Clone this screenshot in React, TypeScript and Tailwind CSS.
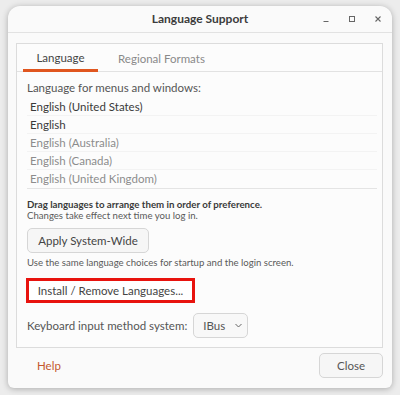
import React from 'react';

const font = { fontFamily: 'Lato, "Noto Sans", sans-serif' };

const languages = [
  { name: 'English (United States)', active: true },
  { name: 'English', active: true },
  { name: 'English (Australia)', active: false },
  { name: 'English (Canada)', active: false },
  { name: 'English (United Kingdom)', active: false },
];

export default function App() {
  return (
    <div className="w-[400px] h-[395px] bg-[#ececec] pt-[6px] pl-[8px]" style={font}>
      <div className="w-[384px] h-[382px] bg-[#fafafa] rounded-t-[12px] rounded-b-[6px] shadow-[0_1px_6px_rgba(0,0,0,0.28)] flex flex-col text-[#444]">
        {/* title bar */}
        <div className="h-[27px] border-b border-[#e2e2e2] flex items-center relative">
          <div className="flex-1 text-center text-[12px] font-bold text-[#3c3c3c]">Language Support</div>
          <div className="absolute right-[8px] top-0 h-full flex items-center gap-[14px] text-[#666]">
            <svg width="12" height="12" viewBox="0 0 12 12"><path d="M3.5 8.5h5" stroke="currentColor" strokeWidth="1" /></svg>
            <svg width="12" height="12" viewBox="0 0 12 12"><rect x="3.5" y="3.5" width="5" height="5" fill="none" stroke="currentColor" strokeWidth="1" /></svg>
            <svg width="12" height="12" viewBox="0 0 12 12"><path d="M3.5 3.5l5 5M8.5 3.5l-5 5" stroke="currentColor" strokeWidth="1.1" /></svg>
          </div>
        </div>

        {/* notebook */}
        <div className="mt-[10px] ml-[8px] w-[367px] h-[305px] border border-[#dcdcdc] bg-[#fcfcfc] flex flex-col">
          <div className="h-[28px] border-b border-[#e2e2e2] flex items-end pl-[6px] text-[11.5px]">
            <div className="w-[75px] h-full flex items-center justify-center border-b-[3px] border-[#e0561f] -mb-px pt-[2px]">Language</div>
            <div className="ml-[20px] h-full flex items-center text-[#8a8a8a] pt-[2px]">Regional Formats</div>
          </div>

          <div className="pl-[10px] pr-[5px] flex flex-col">
            <div className="mt-[7px] text-[11.5px] leading-[17px] text-[#555]">Language for menus and windows:</div>
            <div className="mt-[2px] w-[350px] border-b border-[#e4e4e4]">
              {languages.map((l, i) => (
                <div
                  key={l.name}
                  className={`h-[18px] pl-[3px] flex items-center text-[11.5px] ${i < 4 ? 'border-b border-[#f3f3f3]' : ''} ${l.active ? 'text-[#3a3a3a]' : 'text-[#8c8c8c]'}`}
                >
                  {l.name}
                </div>
              ))}
            </div>
            <div className="mt-[9px] text-[9.7px] leading-[12px] font-bold text-[#3a3a3a]">Drag languages to arrange them in order of preference.</div>
            <div className="text-[9.6px] leading-[12px] text-[#5a5a5a]">Changes take effect next time you log in.</div>
            <button className="mt-[6px] w-[122px] h-[25px] border border-[#d6d6d6] rounded-[5px] bg-[#f6f6f6] text-[11.5px] text-[#444]">Apply System-Wide</button>
            <div className="mt-[4px] text-[9.6px] leading-[12px] text-[#5a5a5a]">Use the same language choices for startup and the login screen.</div>
            <div className="mt-[9px] -ml-[1px] w-[169px] h-[25px] border-[3px] border-[#e8130e]">
              <button className="w-full h-full bg-white text-[11.5px] text-[#444] flex items-center justify-center whitespace-nowrap">Install / Remove Languages...</button>
            </div>
            <div className="mt-[10px] flex items-center">
              <span className="text-[11.5px] text-[#555]">Keyboard input method system:</span>
              <div className="ml-[6px] w-[55px] h-[25px] border border-[#d6d6d6] rounded-[5px] bg-[#f8f8f8] flex items-center pl-[9px] gap-[9px] text-[11.5px] text-[#555]">
                <span>IBus</span>
                <svg width="9" height="9" viewBox="0 0 9 9"><path d="M1.5 3l3 3 3-3" fill="none" stroke="#666" strokeWidth="1" /></svg>
              </div>
            </div>
          </div>
        </div>

        {/* bottom bar */}
        <div className="flex items-center justify-between mt-[5px] pl-[29px] pr-[9px]">
          <span className="text-[11.5px] text-[#c4582f]">Help</span>
          <button className="w-[64px] h-[25px] border border-[#d6d6d6] rounded-[5px] bg-[#f6f6f6] text-[11.5px] text-[#555]">Close</button>
        </div>
      </div>
    </div>
  );
}
